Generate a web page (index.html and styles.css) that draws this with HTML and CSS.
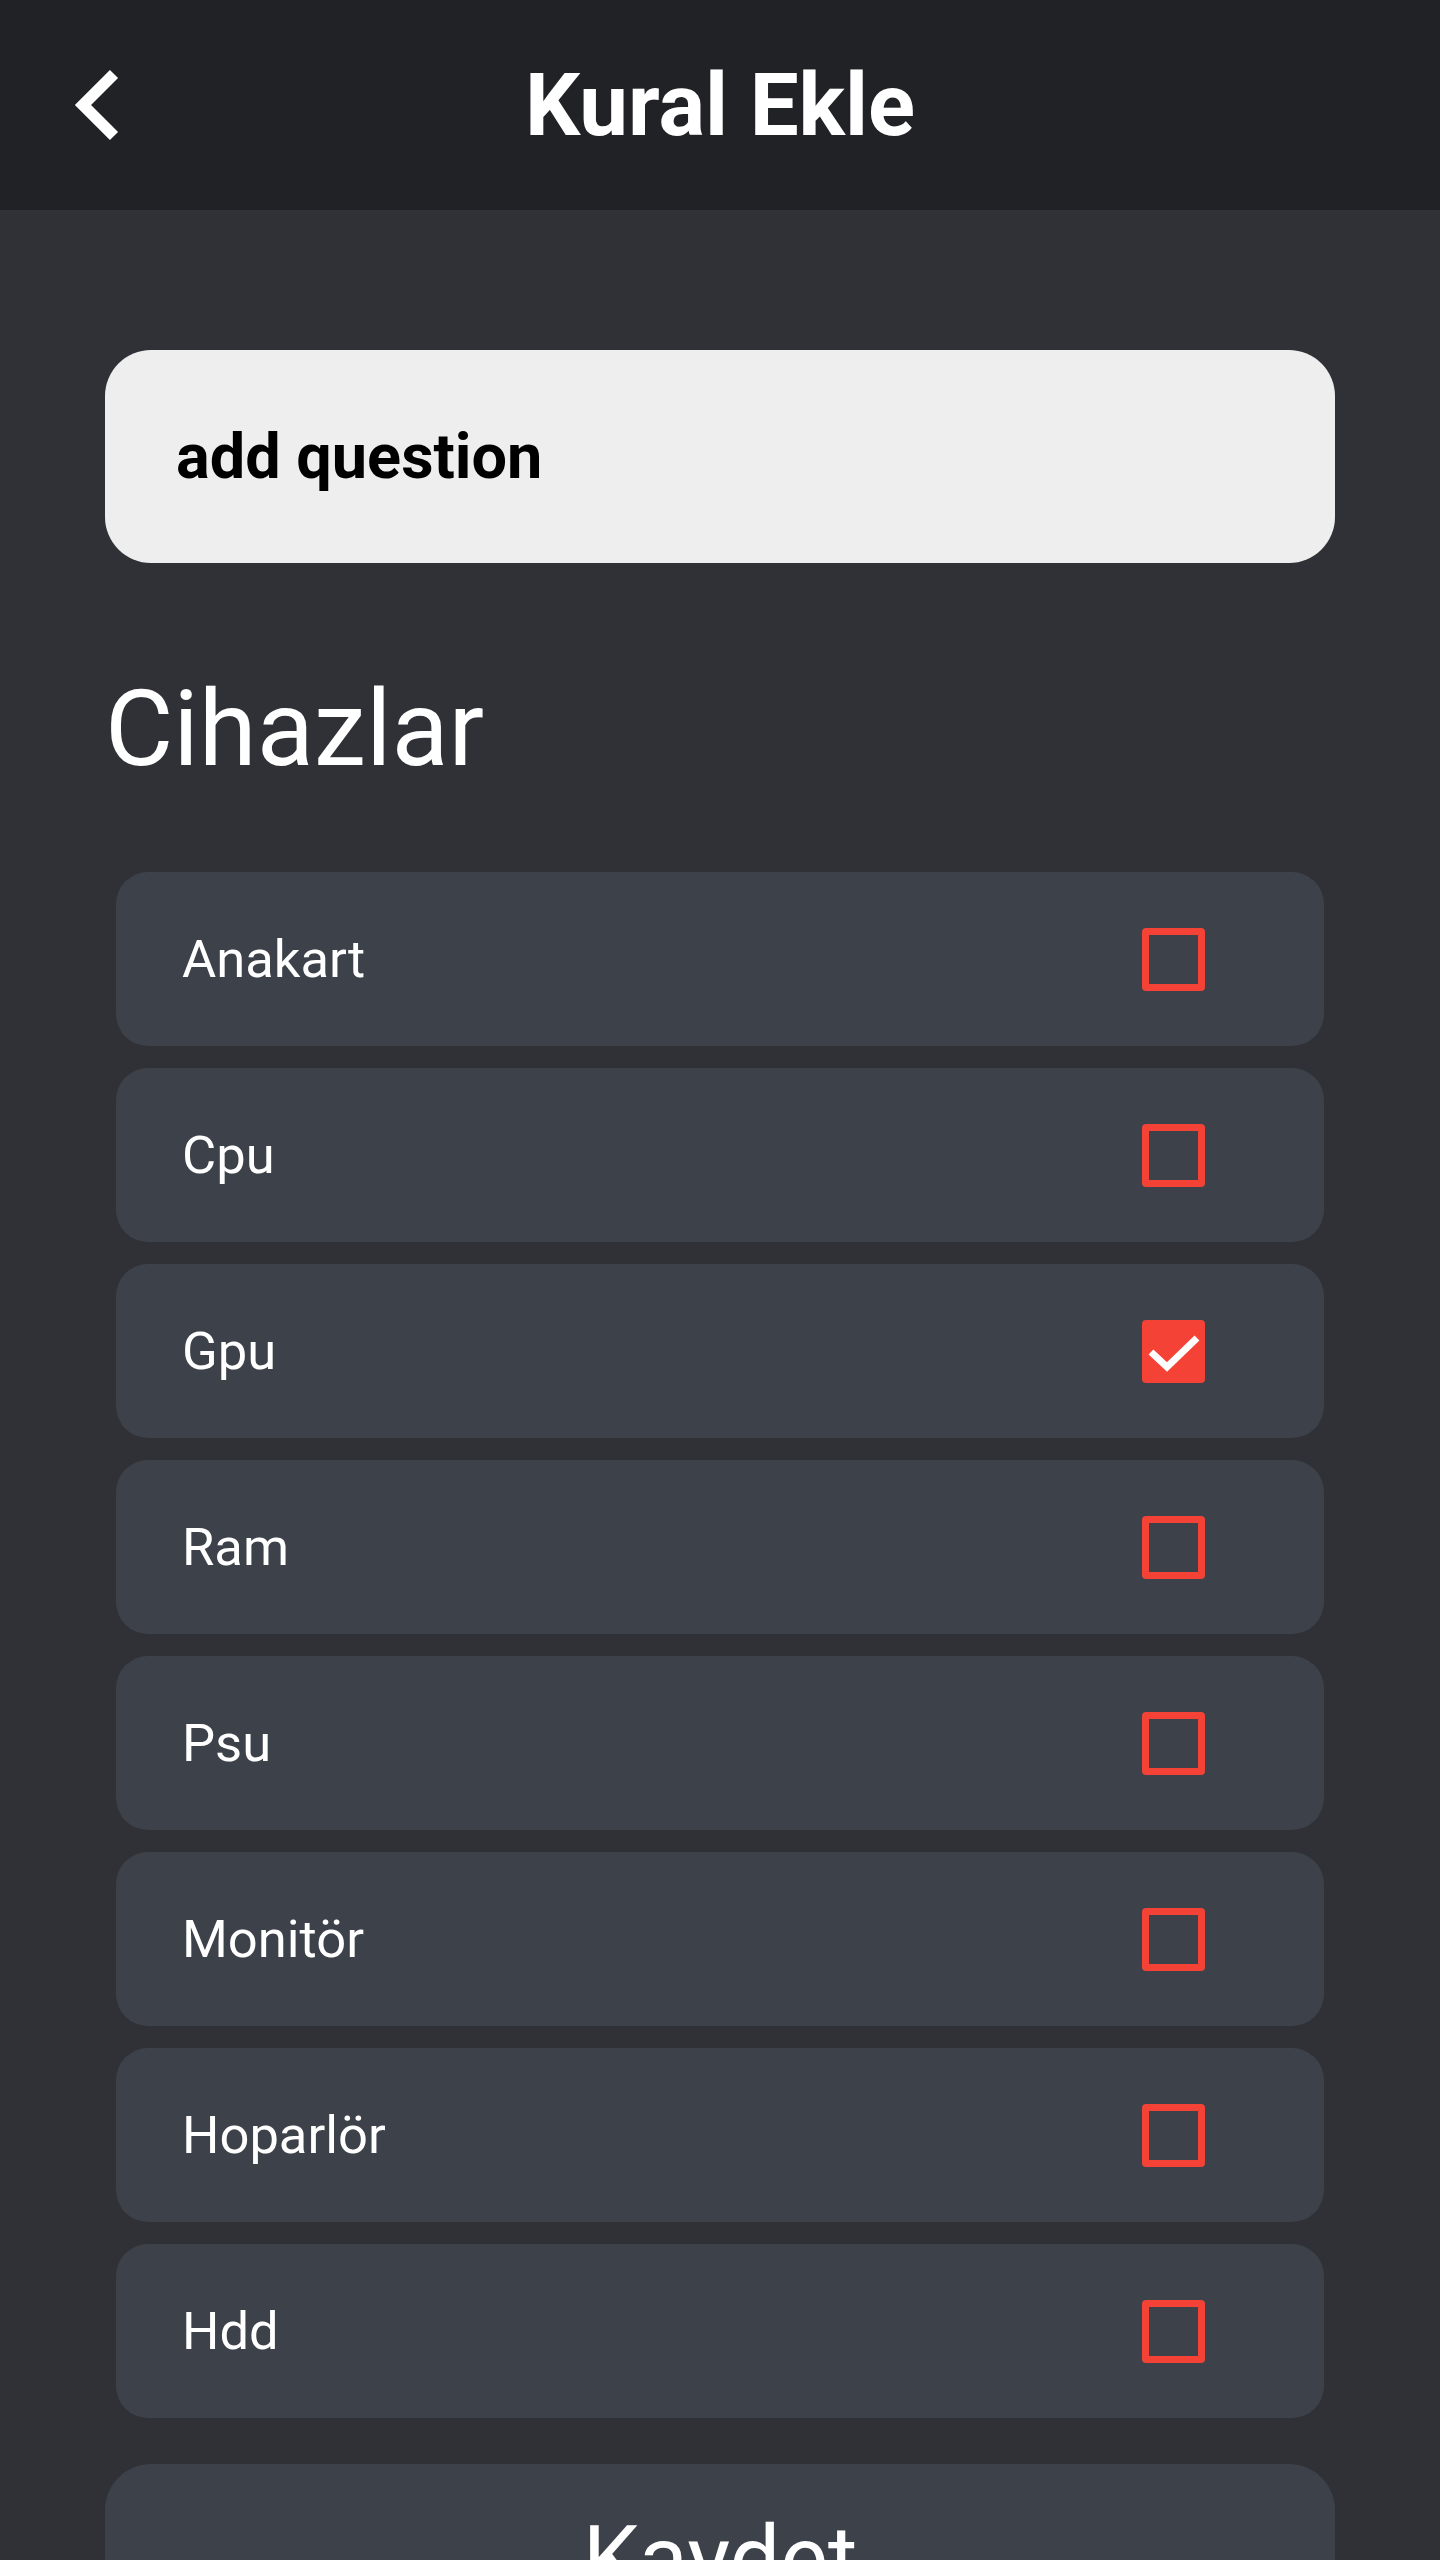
FILE: index.html
```html
<!DOCTYPE html>
<html lang="tr">
<head>
<meta charset="utf-8">
<title>Kural Ekle</title>
<link rel="stylesheet" href="styles.css">
</head>
<body>
<header class="appbar">
  <div class="appbar-left">
    <svg class="back-icon" width="60" height="80" viewBox="0 0 60 80" aria-hidden="true">
      <polyline points="50,9 19,40 50,71" fill="none" stroke="#ffffff" stroke-width="11.5" stroke-linecap="butt" stroke-linejoin="miter"/>
    </svg>
  </div>
  <h1 class="appbar-title">Kural Ekle</h1>
  <div class="appbar-right"></div>
</header>

<main class="content">
  <div class="question-field">add question</div>

  <h2 class="section-title">Cihazlar</h2>

  <ul class="device-list">
    <li class="device-row"><span class="device-name">Anakart</span><span class="checkbox"></span></li>
    <li class="device-row"><span class="device-name">Cpu</span><span class="checkbox"></span></li>
    <li class="device-row"><span class="device-name">Gpu</span><span class="checkbox checked"><svg width="63" height="63" viewBox="0 0 63 63" aria-hidden="true"><polyline points="9,32 25,47 55,18" fill="none" stroke="#ffffff" stroke-width="7"/></svg></span></li>
    <li class="device-row"><span class="device-name">Ram</span><span class="checkbox"></span></li>
    <li class="device-row"><span class="device-name">Psu</span><span class="checkbox"></span></li>
    <li class="device-row"><span class="device-name">Monitör</span><span class="checkbox"></span></li>
    <li class="device-row"><span class="device-name">Hoparlör</span><span class="checkbox"></span></li>
    <li class="device-row"><span class="device-name">Hdd</span><span class="checkbox"></span></li>
  </ul>

  <button class="save-button" type="button">Kaydet</button>
</main>
</body>
</html>
```

FILE: styles.css
```css
* {
  box-sizing: border-box;
}

html, body {
  margin: 0;
  padding: 0;
}

body {
  background: #303136;
  font-family: Roboto, "Liberation Sans", sans-serif;
  color: #ffffff;
  width: 1440px;
  min-height: 2560px;
  overflow: hidden;
}

.appbar {
  height: 210px;
  background: #212226;
  display: grid;
  grid-template-columns: 1fr auto 1fr;
  align-items: center;
}

.appbar-left {
  display: flex;
  align-items: center;
}

.back-icon {
  display: block;
  margin-left: 64px;
}

.appbar-title {
  margin: 0;
  font-size: 87px;
  font-weight: 700;
  line-height: 1;
  color: #ffffff;
}

.content {
  padding: 140px 105px 0 105px;
}

.question-field {
  height: 213px;
  background: #eeeeee;
  border-radius: 46px;
  color: #000000;
  font-size: 63px;
  font-weight: 700;
  display: flex;
  align-items: center;
  padding-left: 71px;
}

.section-title {
  margin: 114px 0 0 0;
  font-size: 105px;
  font-weight: 400;
  line-height: 1;
  color: #ffffff;
}

.device-list {
  list-style: none;
  margin: 90px 11px 0 11px;
  padding: 0;
  display: flex;
  flex-direction: column;
  gap: 22px;
}

.device-row {
  height: 174px;
  background: #3d4149;
  border-radius: 32px;
  display: flex;
  align-items: center;
  justify-content: space-between;
  padding: 0 119px 0 66px;
}

.device-name {
  font-size: 52.5px;
  line-height: 1;
  color: #ffffff;
}

.checkbox {
  width: 63px;
  height: 63px;
  border: 7px solid #f44336;
  border-radius: 4px;
  display: block;
}

.checkbox.checked {
  border: none;
  background: #f44336;
}

.checkbox svg {
  display: block;
}

.save-button {
  display: block;
  width: 100%;
  height: 190px;
  margin-top: 46px;
  background: #3d4149;
  border: none;
  border-radius: 46px;
  color: #ffffff;
  font-family: Roboto, "Liberation Sans", sans-serif;
  font-size: 90px;
  font-weight: 400;
  padding: 0;
}
```
